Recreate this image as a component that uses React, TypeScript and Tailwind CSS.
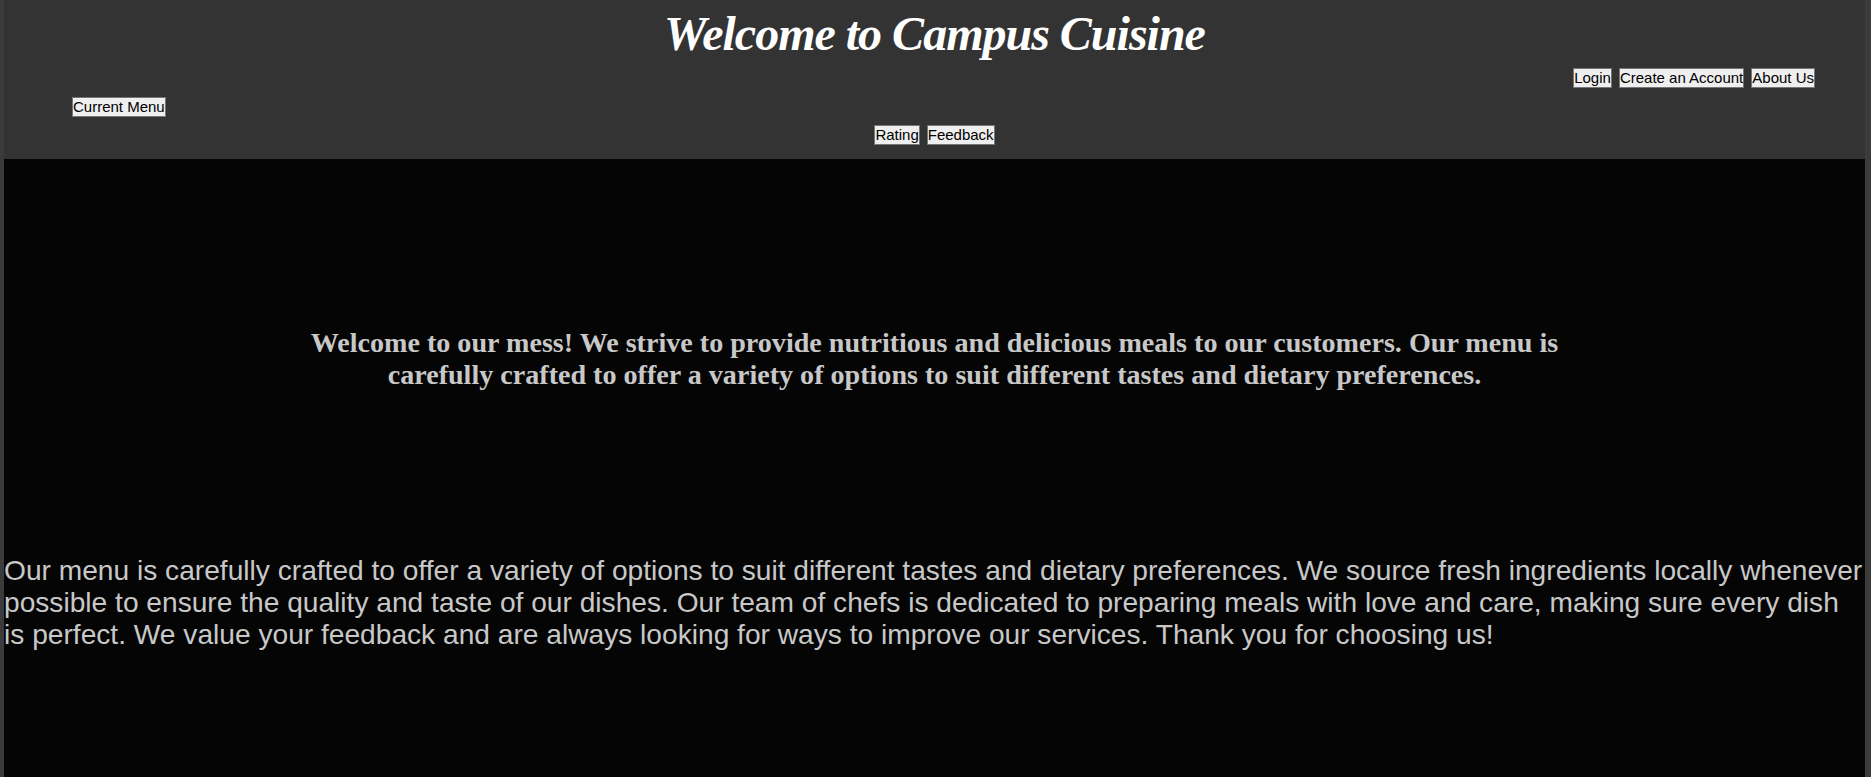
const NavButton = ({ label }: { label: string }) => {
  return (
    <button
      type="button"
      className="h-[20px] border border-[#767676] bg-[#efefef] px-0 text-[15px] leading-[18px] text-black"
      style={{ fontFamily: '"Liberation Sans", Arial, sans-serif' }}
    >
      {label}
    </button>
  );
};

export default function App() {
  return (
    <div className="flex min-h-screen bg-[#3b3b3b] pl-[4px] pr-[6px]">
      <div className="flex flex-1 flex-col">
        <header className="bg-[#333333] pb-[14px] pt-[7px]">
          <h1 className="text-center font-['Liberation_Serif',serif] text-[48px] font-bold italic leading-[53px] tracking-[-1px] text-white">
            Welcome to Campus Cuisine
          </h1>
          <div className="mt-[8px] flex justify-end gap-[7px] pr-[50px]">
            <NavButton label="Login" />
            <NavButton label="Create an Account" />
            <NavButton label="About Us" />
          </div>
          <div className="mt-[9px] flex pl-[68px]">
            <NavButton label="Current Menu" />
          </div>
          <div className="mt-[8px] flex justify-center gap-[7px]">
            <NavButton label="Rating" />
            <NavButton label="Feedback" />
          </div>
        </header>

        <main className="flex-1 bg-[#050505] pt-[168px]">
          <p className="mx-auto w-[70%] text-center font-['Liberation_Serif',serif] text-[28.1px] font-bold leading-[32px] text-[#c8c8c8]">
            Welcome to our mess! We strive to provide nutritious and delicious
            meals to our customers. Our menu is carefully crafted to offer a
            variety of options to suit different tastes and dietary preferences.
          </p>
          <p className="mt-[164px] font-['Liberation_Sans',sans-serif] text-[28.15px] leading-[32px] text-[#c8c8c8]">
            Our menu is carefully crafted to offer a variety of options to suit
            different tastes and dietary preferences. We source fresh
            ingredients locally whenever possible to ensure the quality and
            taste of our dishes. Our team of chefs is dedicated to preparing
            meals with love and care, making sure every dish is perfect. We
            value your feedback and are always looking for ways to improve our
            services. Thank you for choosing us!
          </p>
        </main>
      </div>
    </div>
  );
}
